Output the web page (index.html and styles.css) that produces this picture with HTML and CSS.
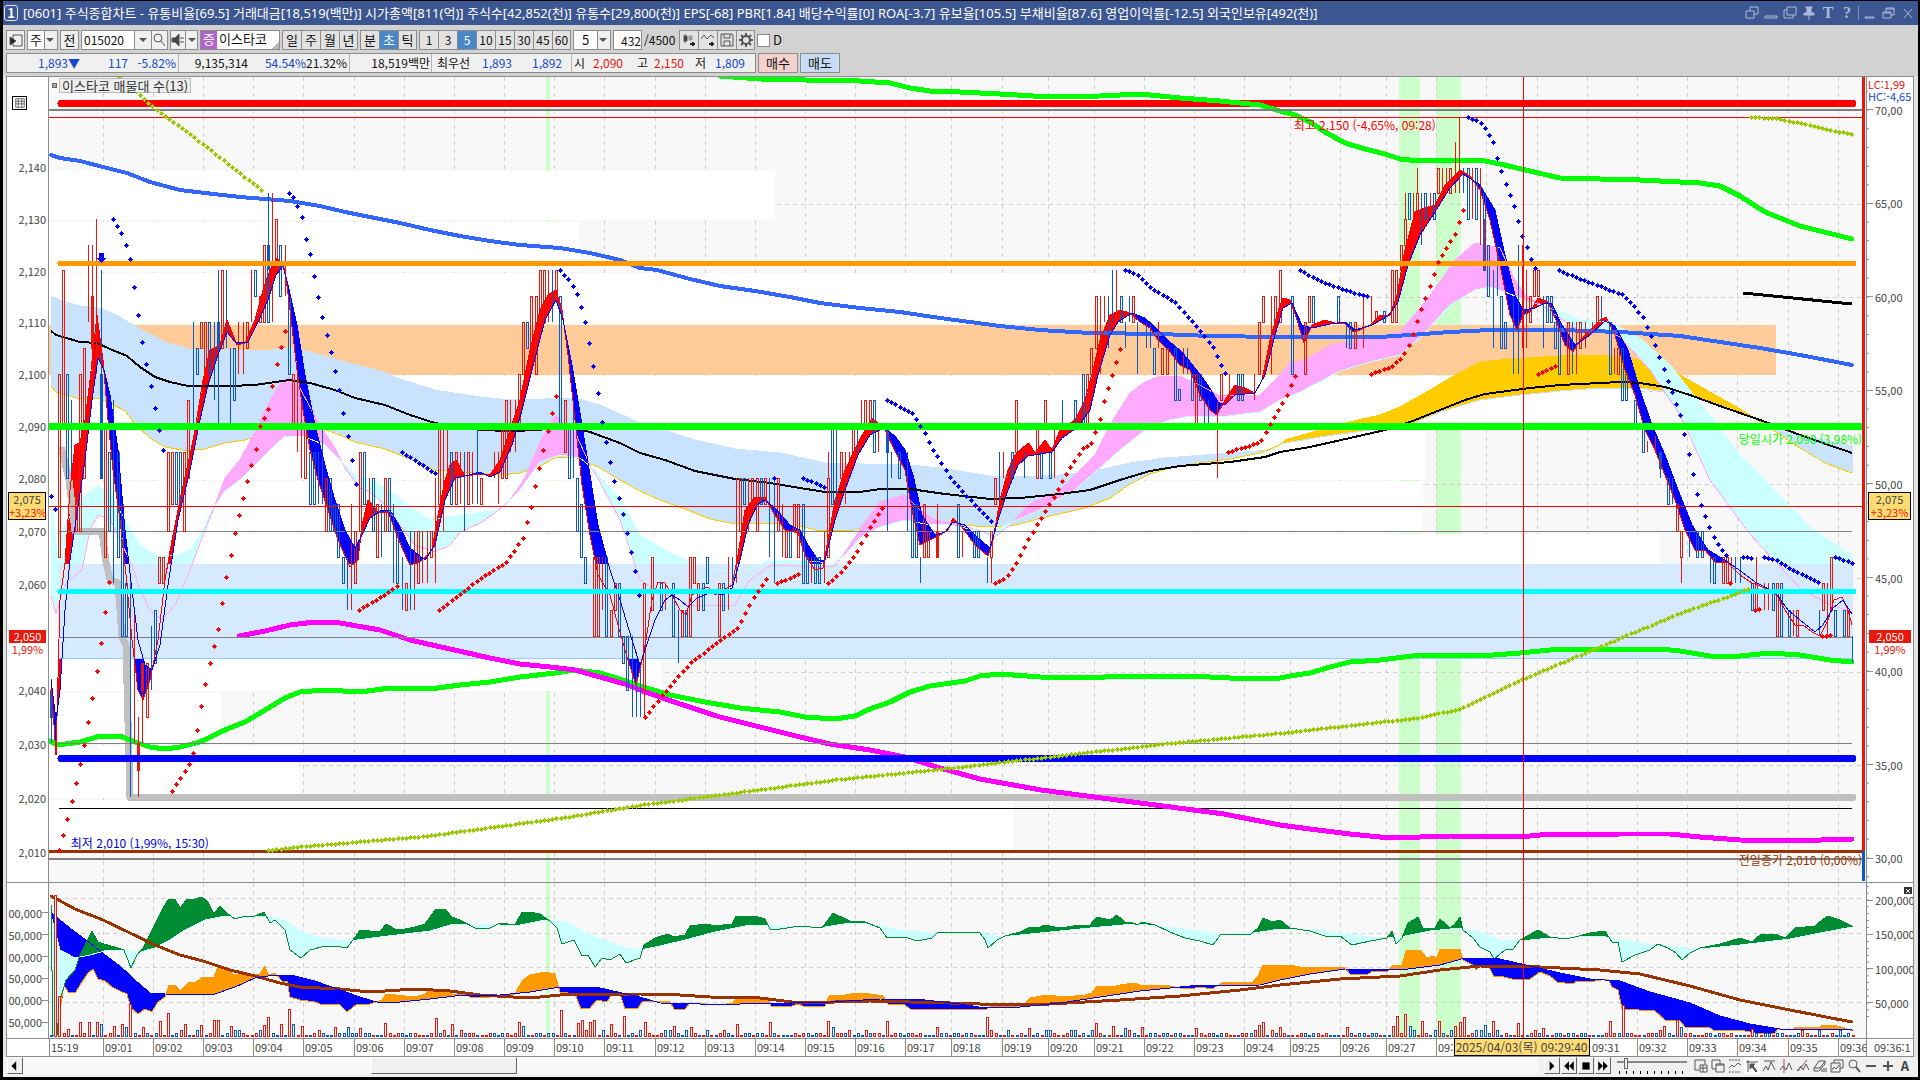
FILE: index.html
```html
<!DOCTYPE html>
<html lang="ko">
<head>
  <meta charset="UTF-8">
  <meta name="viewport" content="width=device-width, initial-scale=1.0">
  <title>[0601] 주식종합차트</title>
  <link rel="stylesheet" href="styles.css">
</head>
<body>
  <header class="titlebar">
    <span class="win-no">1</span>
    <h1>[0601] 주식종합차트 - 유통비율[69.5] 거래대금[18,519(백만)] 시가총액[811(억)] 주식수[42,852(천)] 유통수[29,800(천)] EPS[-68] PBR[1.84] 배당수익률[0] ROA[-3.7] 유보율[105.5] 부채비율[87.6] 영업이익률[-12.5] 외국인보유[492(천)]</h1>
    <div class="win-tools">
      <button aria-label="분리"><svg viewBox="0 0 14 14"><path d="M1 5h8v7H1zM5 5V1h8v7H9"/></svg></button>
      <button aria-label="접기"><svg viewBox="0 0 14 14"><path d="M1 10h12v2H1z"/></svg></button>
      <button aria-label="복사"><svg viewBox="0 0 14 14"><path d="M4 1h9v8H4zM4 4H1v8h9V9"/></svg></button>
      <button aria-label="고정"><svg viewBox="0 0 14 14"><path d="M4 1h6v1H9v5h3v2H2V7h3V2H4zM7 9v5" fill="currentColor"/></svg></button>
      <button aria-label="글꼴">T</button>
      <button aria-label="도움말">?</button>
      <i></i>
      <button aria-label="최소화"><svg viewBox="0 0 14 14"><path d="M2 11h9v1H2z"/></svg></button>
      <button aria-label="복원"><svg viewBox="0 0 14 14"><path d="M1 6h8v6H1zM1 7h8M4 6V2h8v7H9M4 3h8"/></svg></button>
      <button aria-label="닫기"><svg viewBox="0 0 14 14"><path d="M3 3l8 9M11 3l-8 9"/></svg></button>
    </div>
  </header>

  <div class="toolbar">
    <div class="row">
      <div class="group sq"><button aria-label="메뉴"><svg viewBox="0 0 14 14"><path d="M4 2h9v11H4V9M4 6V2"/><path d="M1 4l6 4-6 4z" fill="#222"/></svg></button></div>
      <div class="combo type"><select aria-label="구분"><option>주</option></select></div>
      <div class="group sq"><button>전</button></div>
      <div class="group code">
        <input type="text" value="015020" aria-label="종목코드">
        <button class="down" aria-label="목록"></button>
        <button aria-label="검색"><svg viewBox="0 0 14 14"><circle cx="6" cy="5" r="4"/><path d="M9 8l4 5"/></svg></button>
      </div>
      <div class="group sound">
        <button aria-label="소리"><svg viewBox="0 0 14 14"><path d="M1 5h3l4-4v12L4 9H1z" fill="#444"/><path d="M10 4v2M12 4v2M10 8v2M12 8v2"/></svg></button>
        <button class="down" aria-label="소리 설정"></button>
      </div>
      <div class="group stock"><b>증</b><span>이스타코</span></div>
      <div class="group cells"><button>일</button><button>주</button><button>월</button><button>년</button></div>
      <div class="group cells"><button>분</button><button class="on">초</button><button>틱</button></div>
      <div class="group cells num"><button>1</button><button>3</button><button class="on">5</button><button>10</button><button>15</button><button>30</button><button>45</button><button>60</button></div>
      <div class="combo unit"><select aria-label="단위"><option>5</option></select></div>
      <input class="count" type="text" value="432" aria-label="봉 개수">
      <span class="total">/4500</span>
      <div class="group cells">
        <button aria-label="차트 추가"><svg viewBox="0 0 14 14"><path d="M2 3h3v5H2zM3 1v9" fill="#333"/><path d="M7 3h3v4H7z" fill="#999" stroke="#999"/><path d="M8 11h5M11 9v4" stroke="#222" stroke-width="2"/></svg></button>
        <button aria-label="지표 추가"><svg viewBox="0 0 14 14"><path d="M0 6l3-4 3 4 4-4 3 3"/><path d="M8 11h5M11 9v4" stroke="#222" stroke-width="2"/></svg></button>
        <button aria-label="저장"><svg viewBox="0 0 14 14"><path d="M1 1h11l1 1v11H1zM4 1v4h6V1M4 13V8h6v5"/></svg></button>
        <button aria-label="설정"><svg viewBox="0 0 14 14"><circle cx="7" cy="7" r="4" stroke-width="2"/><path d="M7 0v3M7 11v3M0 7h3M11 7h3M2 2l2 2M10 10l2 2M12 2l-2 2M4 10l-2 2" stroke-width="2"/></svg></button>
      </div>
      <label class="check"><input type="checkbox">D</label>
    </div>
    <div class="row">
      <div class="quote">
        <div class="q1 down-c"><span>1,893▼</span><span>117</span><span>-5.82%</span></div>
        <div class="q2"><span>9,135,314</span><span class="down-c">54.54%</span><span>21.32%</span></div>
        <div class="q3"><span>18,519백만</span></div>
        <div class="q4"><span>최우선</span><span class="down-c">1,893</span><span class="down-c">1,892</span></div>
        <div class="q5"><span>시</span><span class="up-c">2,090</span><span>고</span><span class="up-c">2,150</span><span>저</span><span class="down-c">1,809</span></div>
      </div>
      <button class="order buy">매수</button>
      <button class="order sell">매도</button>
    </div>
  </div>

  <main class="chart">
    <section class="panel price">
      <div class="axis left">
        <button class="grid-btn" aria-label="표 보기"><svg viewBox="0 0 14 14"><path d="M2 2h10v10H2zM2 5h10M2 8h10M5 2v10M9 2v10"/></svg></button>
        <ul>
          <li>2,140</li><li>2,130</li><li>2,120</li><li>2,110</li><li>2,100</li><li>2,090</li><li>2,080</li>
          <li>2,070</li><li>2,060</li><li></li><li>2,040</li><li>2,030</li><li>2,020</li><li>2,010</li>
        </ul>
        <div class="mark cross"><span>2,075</span><em>+3,23%</em></div>
        <div class="mark last"><span>2,050</span><em>1,99%</em></div>
      </div>
      <div class="plot">
        <svg id="price" viewBox="49 77 1817 805" preserveAspectRatio="none"></svg>
        <div class="legend"><i></i><span>이스타코 매물대 수(13)</span></div>
        <span class="note high">최고 2,150 (-4,65%, 09:28)</span>
        <span class="note low">최저 2,010 (1,99%, 15:30)</span>
        <span class="note open">당일시가 2,090 (3,98%)</span>
        <span class="note prev">전일종가 2,010 (0,00%)</span>
      </div>
      <div class="axis right">
        <ul>
          <li>70,00</li><li>65,00</li><li>60,00</li><li>55,00</li><li>50,00</li><li>45,00</li><li>40,00</li><li>35,00</li><li>30,00</li>
        </ul>
        <p class="lc"><span class="up-c">LC:1,99</span><span class="down-c">HC:-4,65</span></p>
        <div class="mark cross"><span>2,075</span><em>+3,23%</em></div>
        <div class="mark last"><span>2,050</span><em>1,99%</em></div>
      </div>
    </section>

    <section class="panel volume">
      <div class="axis left">
        <ul><li>00,000</li><li>50,000</li><li>00,000</li><li>50,000</li><li>00,000</li><li>50,000</li></ul>
      </div>
      <div class="plot"><svg id="volume" viewBox="49 883 1817 155" preserveAspectRatio="none"></svg></div>
      <div class="axis right">
        <button class="close" aria-label="지표 닫기"><svg viewBox="0 0 8 8"><path d="M2 2l4 4M6 2L2 6"/></svg></button>
        <ul><li>200,000</li><li>150,000</li><li>100,000</li><li>50,000</li></ul>
      </div>
    </section>

    <footer class="times">
      <ol>
        <li>15:19</li><li>09:01</li><li>09:02</li><li>09:03</li><li>09:04</li><li>09:05</li><li>09:06</li><li>09:07</li><li>09:08</li><li>09:09</li>
        <li>09:10</li><li>09:11</li><li>09:12</li><li>09:13</li><li>09:14</li><li>09:15</li><li>09:16</li><li>09:17</li><li>09:18</li><li>09:19</li>
        <li>09:20</li><li>09:21</li><li>09:22</li><li>09:23</li><li>09:24</li><li>09:25</li><li>09:26</li><li>09:27</li><li>09:28</li><li></li>
        <li></li><li>09:31</li><li>09:32</li><li>09:33</li><li>09:34</li><li>09:35</li><li>09:36</li>
      </ol>
      <span class="now">09:36:1</span>
      <div class="tip">2025/04/03(목) 09:29:40</div>
    </footer>
  </main>

  <div class="bottom">
    <div class="scroll"><button aria-label="왼쪽으로"><svg viewBox="0 0 10 10"><path d="M6 1v8L2 5z"/></svg></button><div class="track"><div class="thumb"></div></div></div>
    <div class="play">
      <button aria-label="재생"><svg viewBox="0 0 10 10"><path d="M3 1v8l4-4z"/></svg></button>
      <button aria-label="뒤로"><svg viewBox="0 0 10 10"><path d="M5 1v8L1 5zM9 1v8L5 5z"/></svg></button>
      <button aria-label="정지"><svg viewBox="0 0 10 10"><path d="M2 2h6v6H2z"/></svg></button>
      <button aria-label="앞으로"><svg viewBox="0 0 10 10"><path d="M1 1v8l4-4zM5 1v8l4-4z"/></svg></button>
    </div>
    <input class="speed" type="range" min="0" max="9" value="1" aria-label="속도">
    <div class="tools">
      <button aria-label="창 추가"><svg viewBox="0 0 14 14"><path d="M11 5V1H1v10h4M6 6h7v7H6zM9 6v7M6 9h7"/></svg></button>
      <button aria-label="창 복사"><svg viewBox="0 0 14 14"><path d="M9 5V1H1v9h4M5 5h8v8H5zM5 6h8"/></svg></button>
      <button aria-label="범위"><svg viewBox="0 0 14 14"><path d="M1 1h12M1 13h12" stroke-dasharray="2 1"/><path d="M1 9l3-3 2 2 4-4 3 2"/></svg></button>
      <button class="on" aria-label="기준선"><svg viewBox="0 0 14 14"><path d="M1 3h12M3 1v12"/><path d="M5 5h5L8 7l4 5-1 1-4-5-2 2z" fill="#555"/></svg></button>
      <button aria-label="추세선"><svg viewBox="0 0 14 14"><path d="M2 2h11M1 12l3-5 2 4 3-8 4 8"/></svg></button>
      <button aria-label="수직선"><svg viewBox="0 0 14 14"><path d="M5 0v14" stroke="#a04070"/><path d="M1 11l3-4 3 4 3-7 3 7"/></svg></button>
      <button aria-label="사선"><svg viewBox="0 0 14 14"><path d="M2 12L11 1" stroke="#a04070"/><path d="M1 12l4-5 2 4 3-6 3 6"/></svg></button>
      <button aria-label="모두 지우기"><svg viewBox="0 0 14 14"><path d="M1 9l5-7h6L7 9zM1 9v3h5l6-7V2M9 13v-3M11 13V9M13 13V9"/></svg></button>
      <button aria-label="차트 겹치기"><svg viewBox="0 0 14 14"><path d="M4 4V1h9v8h-3M1 4h9v9H1z"/><path d="M2 11l2-3 2 2 3-4"/></svg></button>
      <button aria-label="확대 영역"><svg viewBox="0 0 14 14"><circle cx="6" cy="5" r="4"/><path d="M9 8l4 5" stroke-width="2"/></svg></button>
      <button aria-label="축소"><svg viewBox="0 0 14 14"><path d="M2 7h10" stroke-width="2"/></svg></button>
      <button aria-label="확대"><svg viewBox="0 0 14 14"><path d="M2 7h10M7 2v10" stroke-width="2"/></svg></button>
      <button aria-label="자동">A</button>
    </div>
  </div>

  <script src="chart.js"></script>
</body>
</html>
```
FILE: styles.css
```css
* {
  box-sizing: border-box;
}
body {
  margin: 0;
  padding: 1px 2px 3px 3px;
  height: 100vh;
  display: flex;
  flex-direction: column;
  background: #000;
  color: #111;
  font-family: "Noto Sans CJK KR", sans-serif;
  font-size: 13px;
  line-height: 16px;
  overflow: hidden;
}
button, input, select {
  font: inherit;
  color: inherit;
  margin: 0;
  padding: 0;
  border: 0;
  border-radius: 0;
  background: none;
}
button {
  display: flex;
  align-items: center;
  justify-content: center;
}
ul, ol, p, h1 {
  margin: 0;
  padding: 0;
  list-style: none;
}
svg {
  display: block;
  fill: none;
  stroke: #555;
}
em {
  font-style: normal;
}
.up-c { color: #e8180c; }
.down-c { color: #1048c8; }

/* title bar */
.titlebar {
  flex: 0 0 24px;
  display: flex;
  align-items: center;
  gap: 5px;
  padding: 0 2px 0 1px;
  background: #3b5690;
  color: #fff;
}
.titlebar h1 {
  flex: 1;
  font-family: "Noto Sans", "Noto Sans CJK KR", sans-serif;
  font-size: 13px;
  line-height: 22px;
  font-weight: normal;
  white-space: nowrap;
}
.win-no {
  width: 14px;
  height: 16px;
  border: 1px solid #dde4f4;
  border-radius: 3px;
  font-weight: bold;
  line-height: 14px;
  text-align: center;
}
.win-tools {
  display: flex;
  align-items: center;
  gap: 3px;
  color: #aebbdc;
}
.win-tools button {
  width: 16px;
  height: 16px;
  font-family: "Liberation Serif", serif;
  font-size: 16px;
  font-weight: bold;
}
.win-tools svg {
  width: 14px;
  height: 14px;
  stroke: currentColor;
}
.win-tools i {
  width: 1px;
  height: 14px;
  background: #7d8fba;
}

/* toolbar */
.toolbar {
  flex: 0 0 51px;
  display: flex;
  flex-direction: column;
  gap: 3px;
  padding: 5px 3px 0;
  background: #d2d2d2;
}
.row {
  display: flex;
  align-items: center;
  gap: 2px;
  height: 20px;
}
.group {
  display: flex;
  height: 20px;
  border: 1px solid #8c8c8c;
  background: #f0f0f0;
}
.group svg {
  width: 14px;
  height: 14px;
}
.sq {
  width: 19px;
}
.sq button {
  flex: 1;
}
.combo {
  position: relative;
  height: 20px;
  border: 1px solid #8c8c8c;
  background: #fff;
}
.combo select {
  width: 100%;
  height: 18px;
  appearance: none;
  padding-left: 2px;
}
.combo::after {
  content: "";
  position: absolute;
  right: 3px;
  top: 7px;
  border: 4px solid transparent;
  border-top-color: #555;
  border-bottom: 0;
}
.type {
  width: 31px;
  background: linear-gradient(to right, #fff 16px, #8c8c8c 16px, #8c8c8c 17px, #f0f0f0 17px);
}
.unit {
  width: 38px;
  background: linear-gradient(to right, #fff 23px, #8c8c8c 23px, #8c8c8c 24px, #f0f0f0 24px);
}
.unit select {
  padding-left: 8px;
}
.code {
  width: 87px;
}
.code input {
  width: 52px;
  padding-left: 2px;
  background: #fff;
  font-size: 12px;
}
.code button {
  flex: 1;
  border-left: 1px solid #8c8c8c;
}
.down::before {
  content: "";
  border: 4px solid transparent;
  border-top-color: #555;
  border-bottom: 0;
}
.sound {
  width: 28px;
}
.sound button {
  flex: 1;
}
.sound .down {
  border-left: 1px solid #8c8c8c;
}
.stock {
  width: 80px;
  gap: 2px;
  background: linear-gradient(135deg, #fff 92%, #bbb 92%);
}
.stock b {
  width: 16px;
  background: #b163cc;
  color: #fff;
  font-weight: normal;
  text-align: center;
}
.cells button {
  width: 19px;
  border-left: 1px solid #8c8c8c;
  background: #e2e2e2;
}
.cells button:first-child {
  width: 18px;
  border-left: 0;
}
.cells button:last-child {
  width: 18px;
}
.num {
  font-size: 12px;
}
.cells button.on {
  background: #4a86c8;
  color: #fff;
}
.count {
  width: 29px;
  height: 20px;
  border: 1px solid #8c8c8c;
  background: #fff;
  font-size: 12px;
  text-align: right;
}
.total {
  width: 33px;
  font-size: 12px;
}
.check {
  display: flex;
  align-items: center;
  gap: 3px;
}
.check input {
  width: 13px;
  height: 13px;
  appearance: none;
  border: 1px solid #8c8c8c;
  background: #fff;
}
.quote {
  display: flex;
  width: 750px;
  height: 20px;
  border: 1px solid #8c8c8c;
  background: #f0f0f0;
  font-size: 12px;
}
.quote div {
  display: grid;
  align-items: center;
  text-align: right;
  white-space: nowrap;
}
.quote div + div {
  border-left: 1px solid #b4b4b4;
}
.quote .q1 { grid-template-columns: 73px 48px 48px; width: 171px; }
.quote .q2 { grid-template-columns: 69px 58px 41px; width: 171px; }
.quote .q3 { grid-template-columns: 80px; width: 82px; }
.quote .q4 { grid-template-columns: 38px 42px 50px; width: 140px; }
.quote .q5 { grid-template-columns: 13px 38px 25px 36px 22px 39px; width: 184px; }
.order {
  width: 40px;
  height: 20px;
  border: 1px solid #8c8c8c;
}
.buy { background: #f6d0cc; }
.sell { background: #c6dcf4; }

/* chart */
.chart {
  flex: 1;
  min-height: 0;
  display: flex;
  flex-direction: column;
  padding: 0 4px 0 3px;
  background: #e4e4e4;
}
.panel {
  display: grid;
  grid-template-columns: 43px 1fr 48px;
  grid-template-rows: 100%;
  min-height: 0;
  border-top: 1px solid #8c8c8c;
  background: #fff;
  color: #444;
}
.price { flex: 805 0 0; }
.volume { flex: 155 0 0; }
.axis {
  position: relative;
  overflow: hidden;
  border-right: 1px solid #8c8c8c;
  font-size: 11px;
}
.axis.left, .axis.right {
  border-left: 1px solid #8c8c8c;
}
.axis ul {
  display: grid;
  height: 100%;
}
.axis li {
  display: flex;
  align-items: center;
}
.axis.left li {
  justify-content: flex-end;
  padding-right: 2px;
}
.price .left ul {
  padding-top: 64px;
  padding-bottom: 3px;
  grid-template-rows: 52fr 52fr 51fr 52fr 52fr 52fr 52fr 53fr 53fr 53fr 53fr 54fr 54fr 54fr;
}
.volume .left ul {
  padding: 19px 0 5px;
}
.volume .left li {
  padding-right: 0;
}
.volume .left li::after {
  content: "";
  width: 6px;
  height: 1px;
  background: #8c8c8c;
}
.axis.right li {
  gap: 2px;
  background: linear-gradient(to bottom, transparent 49%, #8c8c8c 49%, #8c8c8c 54%, transparent 54%) 0 0 / 2px 20% repeat-y;
}
.axis.right li::before {
  content: "";
  width: 6px;
  height: 1px;
  background: #8c8c8c;
}
.price .right ul {
  margin-top: -14px;
  height: calc(100% + 37px);
}
.volume .right ul {
  padding-bottom: 18px;
}
.lc {
  position: absolute;
  top: 1px;
  left: 1px;
  line-height: 12px;
  background: #fff;
}
.lc span {
  display: block;
}
.grid-btn {
  position: absolute;
  left: 5px;
  top: 19px;
  width: 15px;
  height: 14px;
  border: 1px solid #000;
}
.grid-btn svg {
  width: 12px;
  height: 12px;
}
.close {
  position: absolute;
  right: 1px;
  top: 4px;
  width: 8px;
  height: 7px;
  background: #333;
}
.close svg {
  width: 8px;
  height: 8px;
  stroke: #fff;
}
.mark {
  position: absolute;
  left: 1px;
  right: 2px;
  line-height: 13px;
  text-align: center;
}
.mark span, .mark em {
  display: block;
}
.mark em {
  color: #e8180c;
}
.cross {
  top: 51.5%;
  border: 1px solid #000;
  background: #ffdc73;
}
.last {
  top: 68.7%;
  left: 2px;
}
.last span {
  background: #e8180c;
  color: #fff;
}
.plot {
  position: relative;
  min-width: 0;
  overflow: hidden;
  background: #f8f8f8;
}
.plot svg {
  width: 100%;
  height: 100%;
  shape-rendering: crispEdges;
}
.legend {
  position: absolute;
  left: 3px;
  top: 1px;
  display: flex;
  align-items: center;
  gap: 2px;
  color: #333;
}
.legend i {
  width: 5px;
  height: 5px;
  border: 1px solid #666;
  background: #aaa;
}
.legend span {
  padding: 0 2px;
  border: 1px solid #bbb;
  background: #eee;
  line-height: 13px;
}
.note {
  position: absolute;
  font-size: 12px;
  white-space: nowrap;
}
.high { left: 68.5%; top: 5%; color: #f00; }
.low { left: 1.2%; top: 94.1%; color: #0000e0; }
.open { left: 93%; top: 44%; color: #0f0; }
.prev { left: 93%; top: 96.3%; color: #930; }

/* time axis */
.times {
  position: relative;
  flex: 0 0 19px;
  display: flex;
  padding-left: 42px;
  border: 1px solid #8c8c8c;
  background: #fff;
  color: #444;
  font-size: 11px;
}
.times ol {
  flex: 1;
  min-width: 0;
  overflow: hidden;
  display: grid;
  grid-template-columns: 54fr 50fr 50fr 50fr 50fr 51fr 50fr 50fr 50fr 50fr 50fr 51fr 50fr 50fr 50fr 50fr 50fr 46fr 51fr 46fr 46fr 50fr 50fr 50fr 46fr 50fr 46fr 50fr 50fr 51fr 50fr 50fr 50fr 50fr 51fr 50fr 28fr;
}
.times li {
  min-width: 0;
  overflow: hidden;
  padding-left: 1px;
  border-left: 1px solid #8c8c8c;
}
.times li:nth-child(32) {
  padding-left: 4px;
}
.now {
  width: 47px;
  padding-left: 7px;
  border-left: 1px solid #8c8c8c;
}
.tip {
  position: absolute;
  left: 75.9%;
  top: -1px;
  height: 18px;
  padding: 0 1px;
  border: 1px solid #000;
  background: #ffdc73;
  font-size: 12px;
  white-space: nowrap;
}

/* bottom bar */
.bottom {
  flex: 0 0 20px;
  display: flex;
  align-items: center;
  gap: 6px;
  padding: 0 5px 3px 4px;
  background: #f0f0f0;
}
.scroll {
  flex: 1;
  display: flex;
  height: 17px;
}
.scroll button, .thumb, .play button {
  width: 16px;
  height: 17px;
  border: 1px solid #fff;
  border-right-color: #666;
  border-bottom-color: #666;
  background: #f0f0f0;
}
.track {
  flex: 1;
  background: #f9f9f9;
}
.track .thumb {
  margin-left: 23%;
  width: 146px;
}
.bottom svg {
  width: 14px;
  height: 14px;
}
.scroll svg, .play svg {
  width: 12px;
  height: 12px;
  fill: #000;
  stroke: none;
}
.play {
  display: flex;
  gap: 1px;
}
.speed {
  width: 70px;
  height: 17px;
  appearance: none;
  background:
    linear-gradient(#888, #888) 0 4px / 100% 2px no-repeat,
    repeating-linear-gradient(to right, #000 0, #000 1px, transparent 1px, transparent 7px) 2px 14px / 100% 3px no-repeat;
}
.speed::-webkit-slider-thumb {
  appearance: none;
  width: 4px;
  height: 11px;
  margin-bottom: 5px;
  border: 1px solid #666;
  background: #f0f0f0;
}
.tools {
  display: flex;
  gap: 1px;
}
.tools button {
  width: 16px;
  height: 17px;
  color: #444;
  font-weight: bold;
}
.tools .on {
  background: #fff;
}

/* drawing */
.grid { stroke: #d0d0d0; stroke-dasharray: 4 4; }
.strip { fill: #cfc; stroke: none; }
.profile { fill: #fff; stroke: none; }
.profile.max { fill: #fc9; }
.gap { fill: #d6eaff; stroke: none; }
.bar-up { stroke: #e8180c; }
.bar-down { stroke: #0c58c8; }
.bar-fill { fill: #fff; }
```
FILE: chart.js
```js
const NS = 'http://www.w3.org/2000/svg';
const STEP = 4.18;
const price = document.getElementById('price');
const volume = document.getElementById('volume');

function add(svg, tag, attrs) {
  const el = document.createElementNS(NS, tag);
  for (const k in attrs) el.setAttribute(k, attrs[k]);
  svg.appendChild(el);
  return el;
}

// log price scale
function py(p) {
  return 851.4 - 10907 * Math.log(p / 2010);
}

function parse(s) {
  return s.trim().split(/\s+/).map(t => t.split(',').map(Number));
}

function at(pts, x) {
  if (x <= pts[0][0]) return pts[0][1];
  for (let i = 1; i < pts.length; i++) {
    if (x <= pts[i][0]) {
      const [x0, y0] = pts[i - 1], [x1, y1] = pts[i];
      return y0 + (y1 - y0) * (x - x0) / (x1 - x0);
    }
  }
  return pts[pts.length - 1][1];
}

function line(svg, s, color, width, cap) {
  add(svg, 'polyline', { points: s, stroke: color, 'stroke-width': width, 'stroke-linecap': cap || 'butt', 'stroke-linejoin': 'round' });
}

function hline(svg, y, x0, x1, color, width, cap) {
  line(svg, `${x0},${y} ${x1},${y}`, color, width, cap);
}

// fills the space between two series, colour depends on which one is on top
function between(svg, a, b, aTop, bTop) {
  a = parse(a);
  b = parse(b);
  let up = '', down = '';
  for (let x = 51; x <= 1852; x++) {
    const ya = at(a, x), yb = at(b, x);
    const d = `M${x + 0.5} ${ya.toFixed(1)}V${yb.toFixed(1)}`;
    if (ya < yb) up += d; else down += d;
  }
  add(svg, 'path', { d: up, stroke: aTop });
  add(svg, 'path', { d: down, stroke: bTop });
}

function dots(s, color) {
  s.trim().split('|').forEach(part => {
    const pts = parse(part);
    const end = pts[pts.length - 1][0];
    for (let x = pts[0][0]; x <= end + 1; x += STEP) {
      add(price, 'circle', { cx: Math.round(x) + 0.5, cy: Math.round(at(pts, x)) + 0.5, r: 2.2, fill: color, stroke: 'none' });
    }
  });
}

const ticks = [103, 153, 203, 253, 303, 354, 404, 454, 504, 554, 604, 655, 705, 755, 805, 855, 905, 951, 1002, 1048,
  1094, 1144, 1194, 1244, 1290, 1340, 1386, 1436, 1486, 1537, 1587, 1637, 1687, 1737, 1788, 1838];

function backdrop(svg, top, bottom, rows) {
  [[546, 4], [1399, 21], [1436, 25]].forEach(([x, w]) => {
    add(svg, 'rect', { x, y: top, width: w, height: bottom - top, class: 'strip' });
  });
  ticks.forEach(x => add(svg, 'path', { d: `M${x + 0.5} ${top}V${bottom}`, class: 'grid' }));
  rows.forEach(y => add(svg, 'path', { d: `M49 ${y + 0.5}H1862`, class: 'grid' }));
}

// ---- price panel ----
backdrop(price, 77, 882, [204, 297, 391, 484, 578, 672, 765, 858]);

// volume profile: top, bottom, right edge
[[171, 220, 775], [222, 272, 579], [273, 324, 1338], [325, 375, 1776], [376, 428, 1640], [429, 480, 1425], [481, 533, 1423],
  [534, 586, 1660], [640, 691, 661], [693, 744, 221], [746, 798, 299], [800, 851, 1013]].forEach(([t, b, x]) => {
  add(price, 'rect', { x: 49, y: t, width: x - 49, height: b - t, class: t === 325 ? 'profile max' : 'profile' });
});

const bandTop = '51,296 60,300 80,306 103,309 120,317 140,329 165,342 188,349 230,350 270,350 290,348 310,352 345,362 380,371 400,379 435,390 480,397 510,400 545,399 575,398 600,405 620,414 640,423 670,432 695,440 735,449 780,453 825,463 860,464 900,464 940,468 990,476 1020,477 1060,475 1095,471 1130,463 1165,458 1230,453 1270,450 1280,444 1320,437 1370,430 1410,425 1440,412 1480,400 1520,395 1560,391 1600,388 1640,388 1660,391 1690,396 1720,405 1760,420 1800,435 1830,441 1852,446';
const bandLow = '51,386 56,392 80,399 97,398 110,403 125,411 135,424 150,438 165,447 188,451 205,449 225,443 245,440 265,433 290,424 310,425 335,433 355,442 385,449 410,459 435,470 460,472 500,475 520,473 540,466 555,458 575,457 600,468 620,480 640,491 660,500 685,509 710,519 735,524 770,523 800,526 820,531 855,530 880,521 905,518 930,522 960,525 990,527 1015,525 1050,516 1085,508 1110,498 1130,484 1150,474 1170,468 1200,463 1230,459 1260,453 1280,445 1285,440 1320,430 1345,423 1380,415 1400,407 1430,390 1450,378 1480,362 1510,359 1560,356 1600,355 1625,357 1650,363 1680,375 1710,392 1740,409 1770,428 1800,448 1825,463 1852,473';
const pink = '51,595 56,613 65,585 75,575 82,570 90,530 98,515 110,519 120,540 132,565 140,590 150,610 162,620 175,605 190,570 205,530 215,505 225,478 240,460 255,432 265,410 280,383 290,377 300,388 310,407 320,425 335,448 345,468 360,488 370,492 385,505 400,525 415,545 435,552 450,545 460,532 480,523 495,513 510,500 525,478 540,442 555,415 575,432 590,465 600,482 620,520 640,580 655,590 680,600 690,606 710,605 735,605 750,580 770,566 790,565 815,568 835,566 850,545 865,522 880,502 905,495 920,510 935,520 960,525 985,532 995,537 1010,525 1030,504 1060,490 1080,470 1095,455 1110,425 1130,393 1145,382 1160,376 1180,376 1205,388 1220,396 1260,395 1280,375 1290,363 1305,360 1330,345 1360,340 1400,332 1430,296 1455,260 1475,243 1500,248 1515,280 1525,295 1540,304 1560,318 1580,331 1605,329 1620,337 1650,370 1680,415 1710,480 1749,533 1774,560 1802,590 1831,605 1852,612';
const aqua = '51,500 58,555 62,530 80,500 97,486 110,492 125,520 140,545 155,555 175,556 190,550 203,530 210,513 225,491 240,480 255,465 270,450 285,436 305,437 325,445 345,465 355,475 375,482 395,495 415,510 430,520 460,515 500,510 520,490 540,462 560,455 580,458 595,470 605,483 620,498 640,535 665,550 690,562 710,568 730,572 750,569 765,562 790,560 820,562 830,566 845,555 860,538 880,527 905,520 925,524 950,525 975,530 990,535 1005,525 1040,510 1075,490 1100,468 1120,450 1145,430 1170,420 1190,416 1220,417 1260,412 1280,400 1300,392 1340,371 1370,362 1400,355 1420,338 1450,305 1475,290 1490,287 1505,292 1530,302 1560,311 1580,320 1610,322 1640,338 1670,365 1708,413 1740,455 1784,500 1810,527 1840,548 1852,555';
const fast = '51,680 56,755 60,600 65,563 70,490 75,445 80,443 85,420 90,380 97,315 103,360 108,420 113,470 120,520 126,575 132,640 138,690 143,700 150,680 158,640 165,580 172,540 180,500 190,455 195,430 203,380 210,350 220,345 227,320 237,345 245,343 255,320 263,290 270,270 277,258 285,270 290,310 297,370 303,410 310,450 318,480 328,510 338,540 350,567 358,560 362,525 368,500 378,512 388,512 395,530 403,550 410,565 420,562 432,550 438,515 445,480 450,465 456,460 465,476 480,474 490,475 500,460 510,430 520,400 530,350 540,310 548,295 556,290 562,310 568,355 575,420 582,485 590,535 598,575 610,595 618,625 628,660 636,685 641,665 646,640 652,600 658,582 665,583 673,597 680,610 686,615 692,595 700,590 708,587 715,595 724,590 732,585 738,555 745,510 755,497 765,497 773,512 785,530 798,533 805,555 815,570 823,568 828,540 835,500 845,470 857,445 865,430 872,418 885,430 897,455 905,470 912,510 920,545 930,540 940,535 948,530 953,518 962,527 975,545 988,556 993,540 1000,500 1008,470 1015,455 1022,448 1029,443 1035,453 1045,440 1052,450 1060,430 1075,420 1085,400 1093,370 1100,340 1110,315 1120,310 1130,313 1140,322 1150,328 1158,340 1170,352 1180,365 1190,370 1200,395 1210,410 1217,415 1225,400 1235,385 1245,388 1255,393 1262,380 1270,340 1280,305 1283,298 1290,300 1297,320 1304,343 1312,325 1325,320 1335,323 1345,324 1353,332 1360,330 1370,325 1380,315 1390,315 1397,295 1405,250 1415,212 1425,208 1435,205 1445,185 1460,170 1470,176 1480,190 1490,220 1500,265 1510,315 1517,330 1523,315 1530,312 1538,298 1548,302 1556,320 1565,345 1573,352 1580,340 1590,330 1600,320 1606,317 1615,335 1625,370 1635,395 1645,430 1655,450 1665,475 1675,500 1685,530 1695,550 1705,550 1715,562 1728,563 1740,575 1752,583 1765,588 1777,595 1785,610 1795,625 1803,625 1812,632 1820,636 1828,620 1834,600 1842,597 1848,610 1852,625';
const slow = '51,680 56,720 60,690 65,610 70,560 76,520 85,460 92,400 98,358 104,370 110,395 118,450 125,530 132,590 138,640 145,665 152,670 160,645 168,585 178,520 190,470 200,420 208,385 218,355 227,332 235,342 248,342 258,322 268,300 276,275 283,266 288,285 297,325 305,375 315,425 325,465 335,500 345,530 355,548 362,535 370,518 382,510 390,510 400,527 410,548 425,560 435,545 445,500 455,478 465,476 480,472 490,477 500,472 512,445 522,410 532,370 545,320 556,300 563,320 572,365 582,425 590,475 598,525 610,570 620,600 632,640 640,665 645,650 655,620 665,600 672,595 680,600 688,607 697,598 712,592 722,595 732,588 740,560 748,525 757,505 765,500 775,508 790,525 800,530 808,545 818,560 825,560 835,520 845,490 858,455 870,435 884,428 895,436 905,450 913,475 922,515 935,535 945,532 953,522 965,525 978,538 990,548 998,520 1008,490 1018,465 1028,456 1040,454 1052,452 1062,438 1078,427 1090,410 1098,375 1110,335 1118,322 1132,313 1145,318 1158,330 1170,342 1182,352 1195,368 1208,385 1218,402 1225,405 1235,395 1255,393 1265,375 1275,335 1283,308 1292,303 1302,325 1312,328 1330,324 1345,322 1355,330 1372,325 1388,316 1398,302 1408,265 1420,235 1435,212 1450,188 1463,174 1480,185 1495,210 1505,255 1515,295 1523,310 1535,308 1545,303 1552,304 1562,325 1575,345 1590,335 1605,321 1615,326 1628,350 1640,390 1652,425 1665,455 1680,495 1692,525 1708,550 1725,560 1742,572 1755,582 1775,592 1788,610 1800,620 1815,632 1823,625 1833,608 1843,600 1852,614';
const black = '51,331 56,335 80,342 97,343 110,349 127,356 140,367 155,377 170,382 188,386 230,386 255,385 275,382 290,380 310,383 335,390 355,398 385,405 410,415 435,423 480,430 510,431 540,430 560,425 590,432 620,443 640,453 665,460 695,471 735,479 770,483 800,488 825,492 860,492 880,489 910,489 945,494 990,499 1020,498 1060,494 1090,490 1120,480 1150,471 1180,466 1230,462 1265,457 1280,452 1310,447 1350,438 1385,430 1410,422 1440,410 1465,400 1485,394 1530,388 1560,385 1600,383 1620,382 1640,383 1665,387 1690,395 1720,406 1760,420 1800,435 1852,453';
const blue = '51,155 60,158 80,161 103,167 127,173 150,182 180,190 205,193 240,197 265,199 290,201 320,206 345,212 375,218 400,223 430,230 460,236 490,241 520,245 560,248 590,253 620,260 640,268 657,270 690,279 720,286 755,291 790,297 820,303 860,308 900,312 940,318 970,322 1000,326 1040,330 1090,333 1160,334 1210,336 1280,337 1380,337 1410,335 1450,332 1490,330 1560,330 1620,332 1680,336 1720,342 1760,348 1800,355 1852,365';

between(price, bandTop, bandLow, '#c9e3ff', '#fc0');
line(price, bandTop, '#c9e3ff', 1);
line(price, bandLow, '#fc0', 1);
between(price, pink, aqua, '#faf', '#cff');
between(price, fast, slow, '#f00', '#00f');
add(price, 'rect', { x: 59, y: 564, width: 1794, height: 94, class: 'gap' });
hline(price, 658.5, 59, 1853, '#9cf', 1);
line(price, pink, '#faf', 1);
line(price, aqua, '#cff', 1);

hline(price, 103.5, 61, 1853, '#f00', 7, 'round');
line(price, '720,76 760,79 805,80 860,81 890,83 910,88 930,91 960,92 1000,94 1050,97 1100,96 1140,94 1180,98 1220,101 1260,105 1280,111 1295,115 1310,122 1325,132 1345,143 1365,149 1385,154 1400,159 1420,161 1440,160 1480,160 1500,164 1530,171 1560,178 1640,180 1700,183 1720,186 1740,196 1765,212 1800,226 1840,236 1852,239', '#0f0', 5, 'round');
hline(price, 110, 49, 1862, '#808080', 2);
hline(price, 117.5, 49, 1862, '#f00', 1);
line(price, '62,450 69,480 75,531 102,531 106,562 110,580 118,583 122,637 126,645 130,797.5 1853,797.5', '#c0c0c0', 7, 'round');
hline(price, 808.5, 59, 1852, '#000', 1);

line(price, '50,741 58,745 80,742 100,736 120,736 135,742 150,747 165,749 180,747 200,742 225,730 245,722 265,710 285,698 300,692 325,690 360,692 390,688 430,689 460,685 490,682 520,677 555,673 575,670 600,673 620,679 640,686 670,695 705,702 740,708 780,712 805,717 835,719 855,716 870,709 890,702 910,692 930,686 965,681 980,676 1000,674 1040,677 1080,678 1130,676 1190,676 1230,678 1280,678 1290,676 1310,673 1330,667 1350,662 1380,660 1420,655 1480,656 1520,653 1560,649 1660,649 1680,651 1710,656 1740,656 1770,653 1800,655 1830,660 1852,662', '#0f0', 5, 'round');
line(price, '239,636 265,631 290,625 315,622 340,623 380,630 410,640 450,649 490,658 520,664 550,667 575,670 600,677 625,684 640,690 680,704 720,717 760,727 800,737 830,744 870,750 905,757 940,768 980,779 1041,790 1102,798 1163,806 1224,814 1280,825 1310,829 1350,834 1380,837 1420,837 1450,836 1520,837 1540,835 1620,834 1670,834 1700,837 1740,840 1790,841 1852,839', '#f0f', 5, 'round');
line(price, blue, '#36f', 4, 'round');
line(price, black, '#000', 2);
line(price, '1743,293 1852,304', '#000', 3);
hline(price, 531.5, 59, 1852, '#808080', 1);
hline(price, 637.5, 59, 1852, '#808080', 1);
hline(price, 743.5, 59, 1852, '#808080', 1);

// candles: x, colour (capital = hollow body, small = wick only), low-high above 2,000
const candles = `51B35-40 51b30-42 59R65-100 63R90-120 67B80-100 71b80-95 76R70-80 80R70-100 84R80-105 88r110-125 92r100-125 92R105-115
96r100-130 101b80-120 101B80-100 105R65-90 109B70-85 113b60-95 118B65-85 122B50-75 126B50-60 130b20-60 134r30-55 138r20-35 138R25-30
142R40-45 142r30-45 147R35-45 151b40-52 155B45-55 159R60-65 163R60-65 168R70-85 172R75-85 176B75-85 180B75-85 184R70-85 188R80-95
193b90-110 197B100-105 201R105-110 205R100-110 209B100-110 214b95-110 218b90-120 218B105-110 222R105-120 226b105-120 230b90-105 234B95-105 238r100-110
243r100-110 247R105-110 251r110-120 255B115-120 260R110-115 264R110-125 268B110-125 268b120-135 272r110-135 276R120-130 280B115-125
285r115-125 289B100-115 293R90-100 297r85-100 301r80-95 305R80-90 310B75-85 314B75-85 318b75-85 322b75-90 326R70-80 330B70-80
334B70-75 338B65-75 343B60-65 347b55-65 351r55-75 355R60-70 360R70-85 364B75-85 369r75-80 373B70-80 377R65-75 381b65-75 385R70-80
389B70-80 393b60-75 397B60-70 402b55-65 406R55-60 410b55-70 414r55-70 418R60-70 422r60-70 427r60-70 431R65-70 435r60-80 439R75-90
443r70-90 447r80-90 451B75-85 456R75-85 460r75-85 464b70-85 468R75-85 472r75-85 477b75-90 481R75-80 494r80-85 498r75-85 502R80-90
506R80-95 510r85-95 515r85-95 519R90-100 523R100-110 527B105-110 531R105-115 536R100-115 540R110-120 544R110-120 548r110-120
552b110-120 556R115-120 560B90-115 565R85-95 569B80-90 573b80-95 577B70-80 581B65-75 585B60-65 594R50-65 598R50-65 602r55-65
606B50-65 611R50-55 615R55-60 619B50-60 623B45-50 627B40-50 632b35-50 636b35-45 640b35-45 644R40-60 644r35-40 652R55-65 661B55-60
665r55-60 673B50-60 678b45-55 682R50-55 686B50-55 690R50-65 694R60-65 698R55-60 703B55-60 707B60-65 719R50-60 723B55-60 728r55-65
732b60-65 736r60-80 740R70-80 744B75-80 748r70-80 752R75-80 757R70-80 761B75-80 765R75-80 769b65-80 774b60-80 778R70-80 782r65-75
786R65-70 790B65-70 794R70-75 798R65-75 803B60-75 807B60-65 811r60-65 815B60-65 819B60-65 824r60-70 828R65-80 828r80-85 832B75-90
836b75-90 841R80-85 845r75-85 849r80-85 853R85-90 857b85-90 861r90-95 865R90-95 870R90-95 874B85-95 878r85-90 887B85-90 887b70-90
891b80-85 899B80-85 907b70-85 912B65-75 916B65-75 920b60-65 924R65-75 928R65-70 937R65-70 937r65-75 958B65-75 962r65-70 974B65-70
978B65-70 987b60-65 991R65-70 991r60-65 995R75-80 999b75-85 1003r80-85 1012B80-85 1016R85-95 1024b80-85 1037R80-90 1041B80-85
1045R90-95 1050B80-85 1054r80-90 1062b90-95 1075B90-95 1083B90-100 1087R90-100 1091R100-105 1096R105-115 1100r100-115 1104r110-115
1108b105-115 1112b110-120 1116r110-120 1121B110-115 1125b105-110 1129b110-115 1133R110-115 1137b100-110 1146b105-110 1150b105-110
1154B100-105 1158r105-110 1162R100-105 1167R100-105 1175B95-105 1179B95-97 1183r100-105 1187b100-105 1192B95-100 1196R90-100
1200B95-100 1204b90-95 1208b90-95 1217r80-95 1221R95-100 1229r95-100 1238B95-100 1242B95-100 1254r95-100 1259R100-110 1263R110-115
1271r100-115 1275R110-115 1280R110-120 1292B100-115 1305R100-110 1309R110-115 1313B110-115 1338B110-115 1346b105-110 1350B105-110
1355R105-110 1363r105-115 1371r110-115 1376R110-112 1384B110-112 1392R110-120 1396R110-120 1401R120-125 1405R125-130 1405r130-135
1409B130-135 1413r130-135 1417R130-135 1417r135-140 1421b125-135 1425B130-135 1430r130-135 1434B130-135 1438R135-140 1442r135-140
1446r135-140 1450R135-140 1455r135-145 1459r135-150 1463b135-140 1468B130-140 1472r130-140 1476B130-140 1480r125-140 1484B120-135
1484r120-130 1488B115-125 1493b105-120 1497b115-125 1501B105-115 1505B105-110 1513b100-115 1518b100-125 1522r105-125 1526r105-120
1530R110-115 1534R115-120 1538R115-120 1543b105-115 1547B110-115 1551B110-115 1555B105-110 1559B100-110 1568R100-110 1572b100-110
1576r100-110 1580R105-110 1585r105-110 1592r108-110 1597R110-115 1601b110-115 1610B100-110 1614r100-105 1618R100-105 1622B95-105
1626B95-100 1635B90-95 1643B85-90 1647r85-87 1655r85-88 1660B82-85 1660b80-85 1668B75-80 1672b75-80 1677R70-75 1681R65-70
1681r60-65 1689b65-70 1697B65-70 1702B65-70 1710b60-65 1714B60-65 1723R60-65 1727R60-65 1731r60-65 1735b60-65 1740b60-65
1752B55-60 1756R55-60 1756r60-65 1764r55-60 1768r55-60 1773B55-60 1777R50-60 1781B50-60 1789B50-55 1793r50-55 1797R50-55
1819b50-55 1823R55-60 1827r50-60 1831R55-65 1835B50-55 1844B50-55 1848R50-55 1852b45-50`;

for (const [, x, type, lo, hi] of candles.matchAll(/(\d+)([RBrb])(\d+)-(\d+)/g)) {
  const top = Math.round(py(2000 + Number(hi)));
  const bottom = Math.round(py(2000 + Number(lo)));
  const cls = type.toLowerCase() === 'r' ? 'bar-up' : 'bar-down';
  if (type === 'R' || type === 'B') {
    add(price, 'rect', { x: x - 0.5, y: top + 0.5, width: 2, height: bottom - top, class: cls });
  } else {
    add(price, 'path', { d: `M${Number(x) + 0.5} ${top}V${bottom}`, class: cls });
  }
}
line(price, fast, '#f00', 1);
line(price, slow, '#00f', 1);

hline(price, 263.5, 60, 1854, '#f90', 5, 'round');
hline(price, 426.5, 49, 1862, '#0f0', 7);
hline(price, 506.5, 49, 1862, '#f00', 1);
hline(price, 591.5, 60, 1854, '#0ff', 5, 'round');
hline(price, 758.5, 61, 1853, '#00f', 7, 'round');
hline(price, 851.5, 49, 1862, '#930', 3);
hline(price, 859, 49, 1862, '#808080', 2);

dots('119,77 137,92 153,107 195,138 264,192|268,850 306,846 425,836 560,818 640,805|640,805 840,779 950,768 1081,753 1171,743 1280,733 1415,718 1460,709 1525,678 1627,635 1680,613 1737,593 1749,588|1751,117 1775,118 1800,123 1830,130 1852,134', '#9c0');
dots(`51,496 55,509|113,219 121,232 126,246 130,260 134,288 142,341 151,388 159,430 163,450
|289,193 293,197 297,205 302,218 305,237 310,254 314,276 322,315 331,353 339,389 347,433 356,485|402,452 435,473
|560,270 569,280 577,294 586,325 594,369 602,423 611,466 615,484 623,515 632,556 636,575 640,598|774,478 775,478|803,478 825,487
|887,400 912,413 918,422 924,432 932,448 941,462 948,475 962,491 975,505 992,521|1125,270 1137,274 1150,287 1175,302 1196,326 1213,347 1225,373
|1300,270 1320,281 1345,290 1367,296|1468,117 1480,122 1484,127 1493,142 1497,157 1505,182 1514,206 1522,235 1530,257 1534,268
|1559,270 1580,279 1605,288 1623,295 1635,307 1643,318 1655,345 1668,382 1681,417 1690,461 1697,494 1706,518 1712,534 1720,548 1727,556
|1743,557 1753,558|1764,557 1774,559 1786,566 1820,583|1835,557 1852,563`, '#00f');
dots(`59,850 67,821 76,782 84,745 92,701 101,642 109,582|172,791 188,766 193,753 201,707 209,666 218,629 226,579 234,536 243,498 247,482 255,452 260,425 268,410 276,366 285,330
|359,610 385,594 397,586|439,610 465,590 485,575 505,563 515,550 523,537 527,521 531,507 535,487 544,448 552,412 556,396
|645,717 662,695 690,663 720,640 738,627 755,595 769,575|777,583 799,574|828,583 838,575 855,555 868,530 882,508
|995,583 1005,578 1016,563 1035,527 1052,500 1068,470 1083,448 1091,443 1098,425 1104,400 1112,375 1121,347
|1228,452 1258,443 1263,438 1268,427 1275,415 1284,400 1296,374|1371,374 1390,367 1402,358 1410,342 1418,318 1430,285 1438,262 1447,247 1455,233 1463,210
|1538,374 1555,366|1730,583 1731,583|1755,610 1760,609|1822,636 1831,635`, '#f00');
add(price, 'path', { d: 'M99 253h5v5h2l-4.500 5l-4.500 -5h2z', fill: '#00f', stroke: 'none' });

add(price, 'path', { d: 'M1523.5 77V882', stroke: '#f00' });
add(price, 'path', { d: 'M1863.5 77V851', stroke: '#e8180c', 'stroke-width': 3 });
add(price, 'path', { d: 'M1863.5 851V881', stroke: '#0c58c8', 'stroke-width': 3 });

// ---- volume panel ----
backdrop(volume, 883, 1038, [898, 933, 967, 1002]);

const osc = '51,905 53,1035 57,1035 60,1000 66,980 75,970 80,955 85,945 92,931 98,942 104,944 118,948 124,950 131,968 137,955 143,948 152,930 158,918 163,908 168,900 175,899 180,908 187,899 195,899 202,897 208,902 214,914 220,906 228,914 235,919 245,916 255,916 264,912 270,923 275,920 285,930 290,950 301,958 310,950 325,946 335,946 347,948 353,940 360,930 380,932 386,924 395,929 405,929 415,927 425,924 435,910 445,909 452,917 462,921 475,928 490,928 500,923 515,925 522,912 530,912 540,914 550,921 557,928 562,944 574,940 582,956 588,955 595,967 602,958 610,960 620,954 626,963 640,958 644,945 655,938 668,934 674,937 685,935 690,926 707,924 715,926 732,924 736,916 755,916 765,919 770,929 780,929 800,926 822,928 828,920 833,913 850,921 865,922 880,928 887,938 905,937 917,941 932,938 937,933 955,932 980,933 985,940 988,948 997,940 1005,936 1020,932 1028,928 1040,927 1045,925 1060,928 1080,925 1090,925 1097,917 1110,920 1117,915 1125,922 1133,923 1138,925 1142,922 1155,925 1170,932 1185,938 1200,941 1213,945 1221,934 1250,935 1258,928 1263,918 1272,922 1280,920 1290,928 1310,931 1325,936 1340,936 1352,945 1370,941 1387,938 1392,931 1396,944 1402,938 1408,923 1418,917 1423,928 1435,928 1440,919 1450,928 1455,924 1460,917 1463,930 1473,938 1480,947 1490,952 1494,959 1505,950 1513,949 1520,940 1538,930 1550,937 1565,939 1575,937 1590,933 1605,931 1612,942 1618,942 1622,962 1635,955 1650,950 1658,944 1668,948 1676,953 1682,960 1690,953 1700,948 1720,944 1740,938 1752,942 1760,935 1775,934 1785,938 1795,928 1815,926 1822,920 1828,916 1840,920 1852,926';
const oscMa = '51,915 60,950 75,958 90,955 104,951 120,950 140,952 155,948 170,940 185,930 205,920 225,916 245,918 265,916 285,920 300,931 320,938 350,941 380,937 430,931 450,925 480,924 500,925 520,925 545,920 565,922 590,935 620,946 640,950 660,946 685,940 715,932 750,925 800,927 825,927 850,923 870,924 900,930 930,933 980,933 1000,937 1030,934 1060,931 1100,927 1135,924 1160,926 1190,930 1220,934 1260,932 1280,929 1310,929 1340,933 1370,937 1400,937 1430,931 1460,928 1480,932 1500,940 1520,941 1550,938 1600,936 1630,941 1660,946 1700,949 1740,945 1790,939 1820,933 1852,927';
const flow = '51,920 53,1010 57,1035 60,1010 64,985 68,992 76,992 82,982 88,973 93,969 98,979 105,981 112,987 120,991 127,994 131,1008 138,1014 145,1009 152,1012 158,1002 165,997 169,985 176,986 180,991 188,983 196,982 203,977 214,977 218,967 228,968 233,975 245,974 260,974 265,966 268,975 275,973 282,981 287,981 290,997 300,1000 315,1002 320,1004 340,1005 347,1012 357,1004 370,1004 382,1000 386,994 405,996 415,997 425,994 430,990 448,989 452,994 465,994 472,998 490,997 505,994 515,994 522,981 530,975 545,972 555,974 560,992 575,994 581,1009 590,1008 597,1000 607,1002 612,994 620,994 625,1009 638,1008 642,1002 655,1001 670,1002 674,1009 685,1009 690,1003 705,1004 720,1005 733,1003 737,997 768,997 771,1006 792,1006 798,1004 803,1006 825,1006 829,996 845,995 855,993 870,994 883,996 888,1004 905,1005 910,1009 985,1010 995,1004 1025,1004 1030,998 1047,995 1065,997 1085,995 1092,993 1097,986 1112,987 1120,985 1135,983 1140,985 1170,986 1180,988 1190,989 1200,987 1212,989 1222,983 1238,982 1252,983 1258,976 1263,965 1290,965 1300,967 1345,968 1350,974 1368,974 1373,971 1388,971 1392,966 1402,965 1406,951 1420,950 1427,958 1433,956 1437,958 1440,949 1460,949 1463,960 1473,965 1476,970 1480,965 1488,965 1494,977 1500,976 1512,979 1530,979 1540,972 1550,976 1557,982 1573,984 1577,981 1595,981 1608,979 1612,987 1618,990 1622,1009 1655,1011 1665,1020 1680,1021 1685,1027 1710,1028 1715,1031 1740,1030 1755,1033 1775,1033 1778,1029 1792,1030 1795,1027 1820,1027 1823,1025 1833,1025 1845,1028 1852,1031';
const flowMa = '51,912 60,920 75,932 90,943 105,955 120,966 135,980 150,993 165,994 200,995 215,994 235,987 255,978 275,975 295,976 315,981 340,990 360,997 380,1003 400,1002 430,999 455,996 500,995 530,992 560,987 600,988 640,997 660,1003 700,1004 740,1004 790,1003 830,1002 880,999 925,1000 960,1004 985,1008 1020,1007 1060,1003 1100,997 1140,991 1190,986 1260,985 1280,980 1310,974 1345,969 1400,970 1440,965 1465,958 1500,959 1530,966 1560,973 1590,979 1620,981 1650,992 1690,1003 1720,1016 1750,1024 1780,1029 1852,1030';

between(volume, flow, flowMa, '#f90', '#00f');
line(volume, flow, '#f90', 1);
between(volume, osc, oscMa, '#008c32', '#cff');
line(volume, oscMa, '#cff', 1);
line(volume, osc, '#008c32', 1);
line(volume, '51,896 75,909 103,920 130,933 155,945 180,955 203,961 230,970 255,976 280,983 300,987 340,989 370,992 415,989 450,991 480,995 530,998 560,995 640,994 680,995 710,997 760,998 800,1003 870,1001 950,1003 1010,1005 1050,1004 1120,1000 1180,996 1240,990 1280,985 1340,979 1400,976 1440,970 1480,966 1540,967 1600,970 1640,974 1690,986 1740,1000 1790,1010 1852,1022', '#930', 3, 'round');
line(volume, flowMa, '#00f', 1);

// tall bars by pixel column, the quiet ones in between stay low
const tall = {};
parse(`55,141 59,40 67,7 80,14 88,14 96,14 101,-12 113,10 122,12 126,-9 130,32 142,9 159,15 168,23 184,12 201,11 214,16 218,16 230,10 264,11
268,19 280,12 289,27 293,-12 301,10 335,9 347,-9 360,8 385,13 435,18 452,12 519,14 523,-10 560,26 577,13 581,16 590,14 594,16 611,12 623,20
644,14 673,10 690,9 736,12 769,14 828,15 832,-9 887,15 937,9 987,19 1029,8 1096,13 1112,10 1125,-8 1141,9 1196,8 1259,11 1263,14 1280,9
1346,9 1392,10 1396,20 1405,22 1409,-10 1422,15 1438,15 1455,10 1459,14 1463,19 1484,-11 1493,15 1518,13 1543,8 1610,15 1622,31 1664,10
1677,16 1681,-9 1752,7`).forEach(([x, h]) => { tall[Math.round((x - 51) / STEP)] = h; });

for (let i = 0; i < 432; i++) {
  const n = (i * 7919 + i * i * 31) % 97;
  const h = tall[i] || (n < 50 ? 1 : n < 80 ? 3 : 6) * (n % 2 ? 1 : -1);
  const x = Math.round(51 + i * STEP);
  const size = Math.abs(h);
  add(volume, 'rect', { x: x - 0.5, y: 1036.5 - size, width: 2, height: size, class: 'bar-fill ' + (h > 0 ? 'bar-up' : 'bar-down') });
}
add(volume, 'path', { d: 'M1523.5 883V1038', stroke: '#f00' });
```
